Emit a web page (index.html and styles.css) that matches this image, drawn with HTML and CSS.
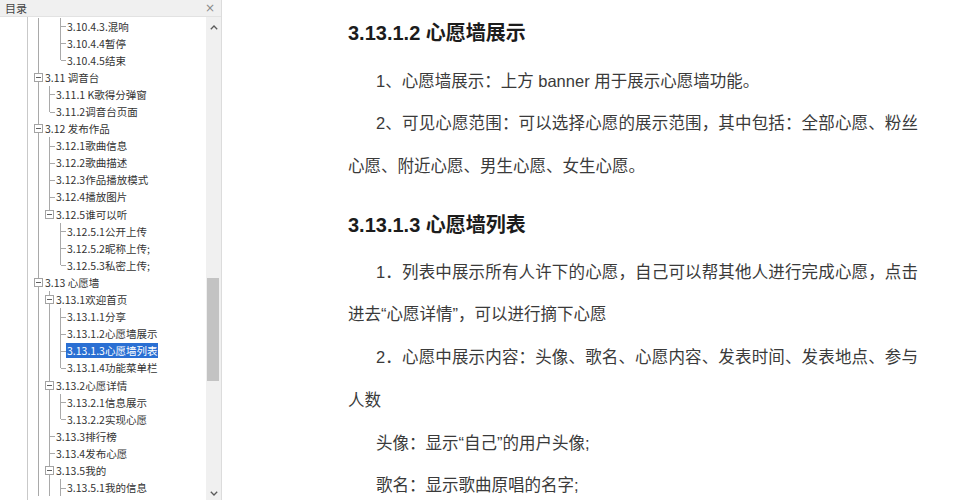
FILE: index.html
```html
<!DOCTYPE html>
<html lang="zh-CN">
<head>
<meta charset="utf-8">
<title>目录</title>
<link rel="stylesheet" href="styles.css">
</head>
<body>
<div class="app">
  <aside class="panel">
    <div class="panel-head"><span class="panel-title">目录</span><span class="panel-close">×</span></div>
    <div class="panel-body">
      <div class="tree">
        <div class="row"><i class="c pipe"></i><i class="c"></i><i class="c tee"></i><span class="lbl">3.10.4.3.混响</span></div>
        <div class="row"><i class="c pipe"></i><i class="c"></i><i class="c tee"></i><span class="lbl">3.10.4.4暂停</span></div>
        <div class="row"><i class="c pipe"></i><i class="c"></i><i class="c elbow"></i><span class="lbl">3.10.4.5结束</span></div>
        <div class="row"><i class="c nd up dn"><b class="bx"></b></i><span class="lbl">3.11 调音台</span></div>
        <div class="row"><i class="c pipe"></i><i class="c tee"></i><span class="lbl">3.11.1 K歌得分弹窗</span></div>
        <div class="row"><i class="c pipe"></i><i class="c elbow"></i><span class="lbl">3.11.2调音台页面</span></div>
        <div class="row"><i class="c nd up dn"><b class="bx"></b></i><span class="lbl">3.12 发布作品</span></div>
        <div class="row"><i class="c pipe"></i><i class="c tee"></i><span class="lbl">3.12.1歌曲信息</span></div>
        <div class="row"><i class="c pipe"></i><i class="c tee"></i><span class="lbl">3.12.2歌曲描述</span></div>
        <div class="row"><i class="c pipe"></i><i class="c tee"></i><span class="lbl">3.12.3作品播放模式</span></div>
        <div class="row"><i class="c pipe"></i><i class="c tee"></i><span class="lbl">3.12.4播放图片</span></div>
        <div class="row"><i class="c pipe"></i><i class="c nd up"><b class="bx"></b></i><span class="lbl">3.12.5谁可以听</span></div>
        <div class="row"><i class="c pipe"></i><i class="c"></i><i class="c tee"></i><span class="lbl">3.12.5.1公开上传</span></div>
        <div class="row"><i class="c pipe"></i><i class="c"></i><i class="c tee"></i><span class="lbl">3.12.5.2昵称上传;</span></div>
        <div class="row"><i class="c pipe"></i><i class="c"></i><i class="c elbow"></i><span class="lbl">3.12.5.3私密上传;</span></div>
        <div class="row"><i class="c nd up dn"><b class="bx"></b></i><span class="lbl">3.13 心愿墙</span></div>
        <div class="row"><i class="c pipe"></i><i class="c nd up dn"><b class="bx"></b></i><span class="lbl">3.13.1欢迎首页</span></div>
        <div class="row"><i class="c pipe"></i><i class="c pipe"></i><i class="c tee"></i><span class="lbl">3.13.1.1分享</span></div>
        <div class="row"><i class="c pipe"></i><i class="c pipe"></i><i class="c tee"></i><span class="lbl">3.13.1.2心愿墙展示</span></div>
        <div class="row"><i class="c pipe"></i><i class="c pipe"></i><i class="c tee"></i><span class="lbl sel">3.13.1.3心愿墙列表</span></div>
        <div class="row"><i class="c pipe"></i><i class="c pipe"></i><i class="c elbow"></i><span class="lbl">3.13.1.4功能菜单栏</span></div>
        <div class="row"><i class="c pipe"></i><i class="c nd up dn"><b class="bx"></b></i><span class="lbl">3.13.2心愿详情</span></div>
        <div class="row"><i class="c pipe"></i><i class="c pipe"></i><i class="c tee"></i><span class="lbl">3.13.2.1信息展示</span></div>
        <div class="row"><i class="c pipe"></i><i class="c pipe"></i><i class="c elbow"></i><span class="lbl">3.13.2.2实现心愿</span></div>
        <div class="row"><i class="c pipe"></i><i class="c tee"></i><span class="lbl">3.13.3排行榜</span></div>
        <div class="row"><i class="c pipe"></i><i class="c tee"></i><span class="lbl">3.13.4发布心愿</span></div>
        <div class="row"><i class="c pipe"></i><i class="c nd up dn"><b class="bx"></b></i><span class="lbl">3.13.5我的</span></div>
        <div class="row"><i class="c pipe"></i><i class="c pipe"></i><i class="c tee"></i><span class="lbl">3.13.5.1我的信息</span></div>
      </div>
      <div class="sbar">
        <div class="sb-btn sb-up"><svg width="8" height="5" viewBox="0 0 8 5"><polyline points="0.8,4.2 4,1 7.2,4.2" fill="none" stroke="#5a5a5a" stroke-width="1.3"/></svg></div>
        <div class="sb-track"><div class="sb-thumb"></div></div>
        <div class="sb-btn sb-down"><svg width="8" height="5" viewBox="0 0 8 5"><polyline points="0.8,0.8 4,4 7.2,0.8" fill="none" stroke="#5a5a5a" stroke-width="1.3"/></svg></div>
      </div>
    </div>
  </aside>
  <main class="doc">
    <h2 class="hd">3.13.1.2 心愿墙展示</h2>
    <p class="para">1、心愿墙展示：上方 banner 用于展示心愿墙功能。</p>
    <p class="para">2、可见心愿范围：可以选择心愿的展示范围，其中包括：全部心愿、粉丝心愿、附近心愿、男生心愿、女生心愿。</p>
    <h2 class="hd hd-next">3.13.1.3 心愿墙列表</h2>
    <p class="para">1．列表中展示所有人许下的心愿，自己可以帮其他人进行完成心愿，点击进去“心愿详情”，可以进行摘下心愿</p>
    <p class="para">2．心愿中展示内容：头像、歌名、心愿内容、发表时间、发表地点、参与人数</p>
    <p class="para">头像：显示“自己”的用户头像;</p>
    <p class="para">歌名：显示歌曲原唱的名字;</p>
  </main>
</div>
</body>
</html>
```

FILE: styles.css
```css
html, body {
  margin: 0;
  padding: 0;
  background: #ffffff;
}

.app {
  display: flex;
  width: 979px;
  height: 500px;
  overflow: hidden;
}

/* ---------- left navigation panel ---------- */
.panel {
  width: 222px;
  flex: none;
  box-sizing: border-box;
  border-right: 1px solid #dcdcdc;
  display: flex;
  flex-direction: column;
  font-family: "Noto Sans CJK SC", sans-serif;
  color: #333333;
}

.panel-head {
  height: 17px;
  box-sizing: border-box;
  background: #f0f0f0;
  border-bottom: 1px solid #e2e2e2;
  display: flex;
  align-items: center;
  justify-content: space-between;
  padding: 0 6px 0 5px;
  font-size: 11px;
  line-height: 16px;
}

.panel-title {
  color: #444444;
}

.panel-close {
  color: #8a8a8a;
  font-size: 12px;
  font-family: "DejaVu Sans", sans-serif;
}

.panel-body {
  flex: 1;
  display: flex;
  min-height: 0;
}

.tree {
  flex: 1;
  margin-left: 27px;
  border-left: 1px solid #c9c9c9;
  padding: 0.5px 0 0 5px;
  overflow: hidden;
  font-size: 10.5px;
}

.row {
  height: 17.1px;
  display: flex;
  align-items: center;
  white-space: nowrap;
}

.c {
  width: 11px;
  flex: none;
  align-self: stretch;
  position: relative;
  display: flex;
  align-items: center;
  justify-content: center;
}

.pipe::before,
.tee::before,
.elbow::before,
.up::before,
.dn::after {
  content: "";
  position: absolute;
  left: 5px;
  width: 1px;
  background: #a9a9a9;
}

.pipe::before,
.tee::before {
  top: 0;
  bottom: 0;
}

.elbow::before {
  top: 0;
  height: 50%;
}

.tee::after,
.elbow::after {
  content: "";
  position: absolute;
  left: 6px;
  right: 0;
  top: 50%;
  height: 1px;
  background: #a9a9a9;
}

.up::before {
  top: 0;
  height: calc(50% - 4.5px);
}

.dn::after {
  bottom: 0;
  height: calc(50% - 4.5px);
}

.bx {
  width: 9px;
  height: 9px;
  box-sizing: border-box;
  border: 1px solid #a3a3a3;
  background: #ffffff;
  display: flex;
  align-items: center;
  justify-content: center;
}

.bx::after {
  content: "";
  width: 5px;
  height: 1px;
  background: #606060;
}

.lbl {
  padding: 0 1px;
  line-height: 15px;
  color: #333333;
}

.lbl.sel {
  background: #2a6fd3;
  color: #ffffff;
}

/* scrollbar */
.sbar {
  width: 15px;
  flex: none;
  background: #f0f0f0;
  display: flex;
  flex-direction: column;
}

.sb-btn {
  display: flex;
  align-items: center;
  justify-content: center;
  flex: none;
}

.sb-up {
  height: 21px;
}

.sb-down {
  height: 14px;
}

.sb-track {
  flex: 1;
  display: flex;
  flex-direction: column;
}

.sb-thumb {
  margin: 240px 2px 0 1px;
  height: 103px;
  background: #c3c3c3;
}

/* ---------- document ---------- */
.doc {
  flex: 1;
  padding: 13px 0 0 126px;
  font-family: "Liberation Sans", "Noto Sans CJK SC", sans-serif;
}

.hd {
  margin: 0 0 6.6px;
  width: 570px;
  font-size: 20px;
  line-height: 40px;
  font-weight: 700;
  color: #1c1c1c;
}

.hd-next {
  margin-top: 17.3px;
  margin-bottom: 5.7px;
}

.para {
  margin: 0;
  width: 570px;
  font-size: 16.5px;
  line-height: 42.7px;
  text-indent: 28px;
  text-align: justify;
  color: #3a3a3a;
}
```
